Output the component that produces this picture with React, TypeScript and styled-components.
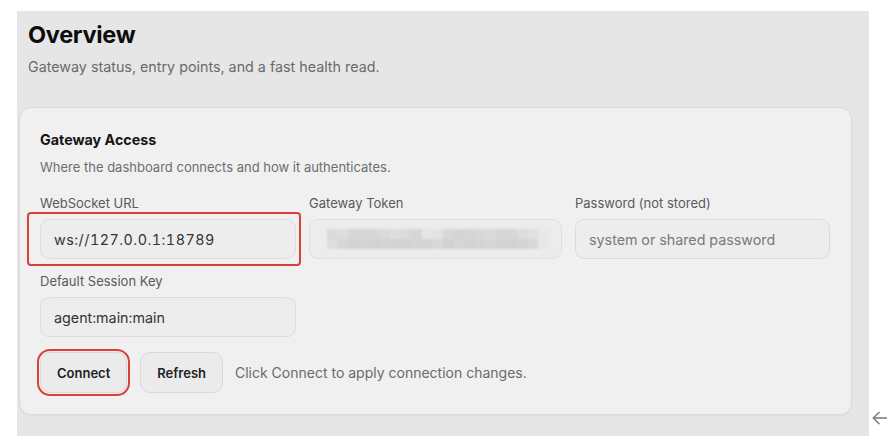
import React from 'react'
import styled, { createGlobalStyle } from 'styled-components'

const GlobalStyle = createGlobalStyle`
  html, body {
    margin: 0;
    padding: 0;
    background: #ffffff;
  }
  body {
    font-family: Inter, "Noto Sans", "DejaVu Sans", sans-serif;
    color: #141414;
    overflow: hidden;
  }
`

const Page = styled.div`
  display: flex;
  align-items: flex-end;
  height: 436px;
  padding: 11px 0 0 17px;
  box-sizing: border-box;
`

const Panel = styled.main`
  width: 852px;
  height: 425px;
  flex: none;
  background: #e6e6e6;
  padding: 9px 17px 0 2px;
  box-sizing: border-box;
`

const Header = styled.header`
  padding-left: 9px;
  margin-bottom: 31px;
`

const Title = styled.h1`
  margin: 0;
  font-size: 23.5px;
  line-height: 30px;
  font-weight: 700;
  letter-spacing: -0.3px;
  color: #0d0d0d;
`

const Subtitle = styled.p`
  margin: 8px 0 0;
  font-size: 14.3px;
  line-height: 18px;
  color: #6a6a6a;
`

const Card = styled.section`
  background: #f0f0f0;
  border: 1px solid #dadada;
  border-radius: 12px;
  padding: 22px 20px 21px;
  box-shadow: 0 1px 2px rgba(0, 0, 0, 0.04);
`

const CardTitle = styled.h2`
  margin: 0;
  font-size: 14.3px;
  line-height: 20px;
  font-weight: 700;
  color: #141414;
`

const CardSub = styled.p`
  margin: 8px 0 19px;
  font-size: 13px;
  line-height: 18px;
  color: #6e6e6e;
`

const Grid = styled.div`
  display: grid;
  grid-template-columns: 256px 253px 255px;
  column-gap: 13px;
  row-gap: 14px;
`

const Field = styled.label`
  display: flex;
  flex-direction: column;
  gap: 8px;
`

const Label = styled.span`
  font-size: 13px;
  line-height: 16px;
  color: #5a5a5a;
`

const InputWrap = styled.div`
  position: relative;
`

const Highlight = styled.div`
  position: absolute;
  top: -7px;
  bottom: -7px;
  left: -13px;
  right: -5px;
  border: 2px solid #d8403a;
  border-radius: 4px;
  pointer-events: none;
`

const Input = styled.input<{ $wideDigits?: boolean }>`
  box-sizing: border-box;
  width: 100%;
  height: 40px;
  padding: 0 13px;
  border: 1px solid #dcdcdc;
  border-radius: 9px;
  background: #ededed;
  font-family: inherit;
  font-size: 14.3px;
  font-variant-numeric: tabular-nums;
  letter-spacing: ${p => (p.$wideDigits ? '0.5px' : '0')};
  color: #333333;
  outline: none;

  &::placeholder {
    color: #7a7a7a;
  }
`

const Masked = styled.div`
  box-sizing: border-box;
  height: 40px;
  border: 1px solid #e0e0e0;
  border-radius: 9px;
  background: #ececec;
  display: flex;
  align-items: center;
  padding: 0 12px 0 6px;
  overflow: hidden;
`

const Pixels = styled.div`
  display: grid;
  grid-template-columns: repeat(22, 1fr);
  grid-template-rows: 10px 10px;
  width: 100%;
  filter: blur(1.2px);
`

const Px = styled.span<{ $shade: number }>`
  background: ${p => `rgb(${p.$shade}, ${p.$shade}, ${p.$shade})`};
`

const Actions = styled.div`
  display: flex;
  align-items: center;
  gap: 13px;
  margin-top: 15px;
`

const Button = styled.button<{ $marked?: boolean }>`
  height: 41px;
  padding: 0 16px;
  border: 1px solid #d9d9d9;
  border-radius: 10px;
  background: #ebebeb;
  font-family: inherit;
  font-size: 13px;
  font-weight: 600;
  color: #222222;
  cursor: pointer;
  outline: ${p => (p.$marked ? '2px solid #d8403a' : 'none')};
  outline-offset: 1px;
`

const Hint = styled.span`
  font-size: 14px;
  color: #6a6a6a;
  margin-left: -1px;
`

const Back = styled.button`
  flex: none;
  margin: 0 0 8px 1px;
  padding: 0;
  border: none;
  background: none;
  color: #777777;
  display: flex;
`

const shades = [
  236, 218, 222, 214, 214, 214, 218, 222, 218, 214, 230, 226, 216, 212, 214, 216, 218, 214, 214, 220, 224, 232,
  236, 222, 214, 210, 212, 210, 212, 210, 210, 212, 212, 216, 210, 214, 210, 212, 214, 210, 210, 212, 216, 232,
]

export default function App() {
  return (
    <>
      <GlobalStyle />
      <Page>
        <Panel>
          <Header>
            <Title>Overview</Title>
            <Subtitle>Gateway status, entry points, and a fast health read.</Subtitle>
          </Header>
          <Card>
            <CardTitle>Gateway Access</CardTitle>
            <CardSub>Where the dashboard connects and how it authenticates.</CardSub>
            <Grid>
              <Field>
                <Label>WebSocket URL</Label>
                <InputWrap>
                  <Input $wideDigits defaultValue="ws://127.0.0.1:18789" />
                  <Highlight />
                </InputWrap>
              </Field>
              <Field>
                <Label>Gateway Token</Label>
                <Masked>
                  <Pixels>
                    {shades.map((s, i) => (
                      <Px key={i} $shade={s} />
                    ))}
                  </Pixels>
                </Masked>
              </Field>
              <Field>
                <Label>Password (not stored)</Label>
                <Input type="password" placeholder="system or shared password" />
              </Field>
              <Field>
                <Label>Default Session Key</Label>
                <Input defaultValue="agent:main:main" />
              </Field>
            </Grid>
            <Actions>
              <Button $marked>Connect</Button>
              <Button>Refresh</Button>
              <Hint>Click Connect to apply connection changes.</Hint>
            </Actions>
          </Card>
        </Panel>
        <Back aria-label="Back">
          <svg width="20" height="20" viewBox="0 0 24 24" fill="none" stroke="currentColor" strokeWidth="1.6" strokeLinecap="round" strokeLinejoin="round">
            <path d="M20 12H4" />
            <path d="M11 5l-7 7 7 7" />
          </svg>
        </Back>
      </Page>
    </>
  )
}
